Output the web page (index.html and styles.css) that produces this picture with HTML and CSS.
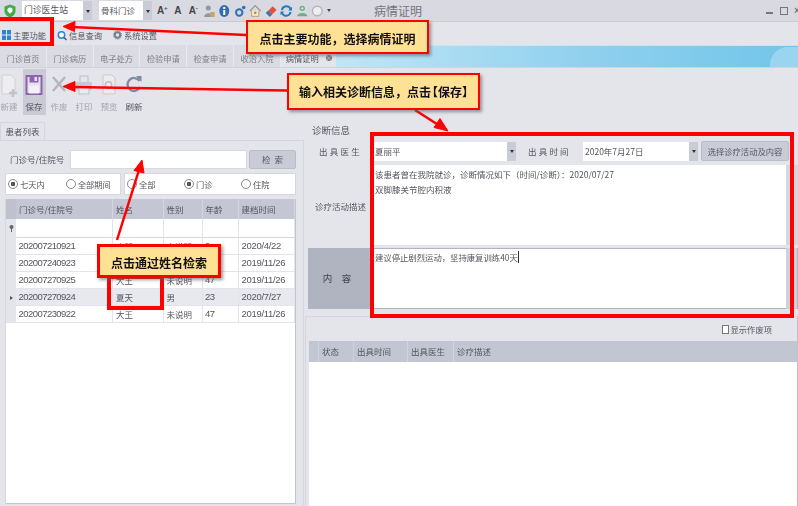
FILE: index.html
```html
<!DOCTYPE html>
<html lang="zh-CN">
<head>
<meta charset="utf-8">
<title>病情证明</title>
<link rel="stylesheet" href="styles.css">
</head>
<body>
<div class="stage">
<div class="app">
  <header class="titlebar">
    <svg class="shield" width="12" height="14" viewBox="0 0 12 14"><path d="M6 0.5 11.5 2.5V7C11.5 10.5 8.5 12.500 6 13.500 3.500 12.500.5 10.500.5 7V2.500Z" fill="#3fae45"/><circle cx="6" cy="6" r="2.600" fill="#fff"/><path d="M6 10 4 6.500H8Z" fill="#fff"/></svg>
    <div class="combo combo-station"><span class="combo-text">门诊医生站</span><span class="combo-arrow"></span></div>
    <div class="combo combo-dept"><span class="combo-text">骨科门诊</span><span class="combo-arrow"></span></div>
    <div class="quick">
      <span class="glyph">A<sup>+</sup></span>
      <span class="glyph">A</span>
      <span class="glyph">A<sup>-</sup></span>
      <svg viewBox="0 0 12 14"><circle cx="5" cy="4" r="2.500" fill="#8d97a3"/><path d="M1 13C1 8 9 8 9 13Z" fill="#8d97a3"/><rect x="7" y="8" width="4.500" height="5" fill="#c9a469"/></svg>
      <svg viewBox="0 0 12 14"><ellipse cx="6" cy="7" rx="5" ry="6" fill="#2f6fb5"/><rect x="5" y="6" width="2" height="5" fill="#fff"/><rect x="5" y="3" width="2" height="2" fill="#fff"/></svg>
      <svg viewBox="0 0 12 14"><circle cx="5" cy="8.500" r="3.200" fill="none" stroke="#2f6fb5" stroke-width="2"/><circle cx="9.500" cy="3.500" r="1.800" fill="#2f6fb5"/></svg>
      <svg viewBox="0 0 14 14"><path d="M1 7 7 1 13 7" fill="none" stroke="#999" stroke-width="1.500"/><path d="M3 7V13H11V7" fill="#f0ead8" stroke="#b79a5c"/><circle cx="7" cy="9" r="1.500" fill="#d9822b"/></svg>
      <svg viewBox="0 0 13 14"><path d="M1 9 8 2 12 6 5 13Z" fill="#e2533f"/><path d="M1 9 3 7 7 11 5 13Z" fill="#1f7fc4"/></svg>
      <svg viewBox="0 0 13 14"><path d="M2 6A4.700 4.700 0 0 1 11 5M11 8A4.700 4.700 0 0 1 2 9" fill="none" stroke="#1f7fc4" stroke-width="2"/><path d="M12.500 2.500V6.500H8.500ZM.5 11.500V7.500H4.500Z" fill="#1f7fc4"/></svg>
      <svg viewBox="0 0 14 14"><circle cx="7" cy="4" r="3" fill="#6fae84"/><path d="M1 13C2 8 12 8 13 13Z" fill="#6fae84"/><circle cx="7" cy="4" r="1.300" fill="#e4f0e6"/></svg>
      <svg viewBox="0 0 13 14"><circle cx="6.500" cy="7" r="5" fill="#eee" stroke="#b5b5bd" stroke-width="1.500"/></svg>
      <span class="mini-arrow"></span>
    </div>
    <div class="app-title">病情证明</div>
    <div class="winctl">
      <span class="win-min"></span>
      <span class="win-max"></span>
      <span class="win-close">×</span>
    </div>
  </header>

  <nav class="menubar">
    <div class="menu-item">
      <svg width="9" height="10" viewBox="0 0 9 10"><rect width="4" height="4.500" fill="#2a86cf"/><rect x="5" width="4" height="4.500" fill="#2a86cf"/><rect y="5.500" width="4" height="4.500" fill="#2a86cf"/><rect x="5" y="5.500" width="4" height="4.500" fill="#2a86cf"/></svg>
      <span>主要功能</span>
    </div>
    <div class="menu-item">
      <svg width="10" height="11" viewBox="0 0 10 11"><circle cx="4.500" cy="5" r="3.200" fill="#fff" stroke="#2a86cf" stroke-width="1.500"/><path d="M7 7.500 9.500 10" stroke="#555" stroke-width="1.500"/></svg>
      <span>信息查询</span>
    </div>
    <div class="menu-item">
      <svg width="9" height="10" viewBox="0 0 10 10"><circle cx="5" cy="5" r="3" fill="none" stroke="#73808f" stroke-width="2.200"/><circle cx="5" cy="5" r="4.600" fill="none" stroke="#73808f" stroke-width="1" stroke-dasharray="1.500 1.400"/></svg>
      <span>系统设置</span>
    </div>
  </nav>

  <div class="tabstrip">
    <span class="tab">门诊首页</span>
    <span class="tab">门诊病历</span>
    <span class="tab">电子处方</span>
    <span class="tab">检验申请</span>
    <span class="tab">检查申请</span>
    <span class="tab">收治入院</span>
    <span class="tab tab-active">病情证明<i class="tab-close">×</i></span>
    <span class="tab-fill"></span>
  </div>

  <div class="toolbar">
    <div class="tool tool-off">
      <svg width="18" height="24" viewBox="0 0 18 24"><path d="M2 1H11L15 5V20H2Z" fill="#eeeef0" stroke="#cfcfd3"/><path d="M13 15V23M9 19H17" stroke="#c4c4c8" stroke-width="2.500"/></svg>
      <span>新建</span>
    </div>
    <div class="tool tool-on">
      <svg width="20" height="24" viewBox="0 0 20 24"><path d="M2.500 2H17.500V20H2.500Z" fill="#e6dff0" stroke="#8d65ad" stroke-width="2"/><rect x="5.500" y="2" width="9" height="6.500" fill="#8d65ad"/><rect x="10.500" y="3" width="2.500" height="4" fill="#e6dff0"/><rect x="5" y="11.500" width="10" height="8" fill="#f4f0f8"/></svg>
      <span>保存</span>
    </div>
    <div class="tool tool-off">
      <svg width="18" height="24" viewBox="0 0 18 24"><path d="M3 3 15 17M15 3 3 17" stroke="#b4b6bf" stroke-width="2.500"/></svg>
      <span>作废</span>
    </div>
    <div class="tool tool-off">
      <svg width="18" height="24" viewBox="0 0 18 24"><rect x="5" y="2" width="8" height="7" fill="#e6e6ea" stroke="#bdbdc3"/><rect x="1" y="8" width="16" height="8" fill="#c8c9cf"/><rect x="4" y="13" width="10" height="7" fill="#ececef" stroke="#bdbdc3"/></svg>
      <span>打印</span>
    </div>
    <div class="tool tool-off">
      <svg width="18" height="24" viewBox="0 0 18 24"><path d="M3 1H12L15 4V20H3Z" fill="#ececef" stroke="#c9c9ce"/><circle cx="8.500" cy="11" r="3.200" fill="none" stroke="#bdbdc3" stroke-width="1.500"/></svg>
      <span>预览</span>
    </div>
    <div class="tool">
      <svg width="18" height="24" viewBox="0 0 18 24"><path d="M14.500 7A6.500 6.500 0 1 0 15 13" fill="none" stroke="#7f8ba1" stroke-width="2.300"/><path d="M11 2H16.500V8Z" fill="#7f8ba1"/></svg>
      <span>刷新</span>
    </div>
  </div>

  <main class="workspace">
    <section class="left-pane">
      <div class="pane-tab">患者列表</div>
      <div class="pane-body">
        <div class="search-row">
          <label class="search-label">门诊号/住院号</label>
          <div class="input"></div>
          <button class="btn-search">检 索</button>
        </div>
        <div class="filter-row">
          <div class="radio-box radio-box-a">
            <span class="radio checked">七天内</span>
            <span class="radio">全部期间</span>
          </div>
          <div class="radio-box radio-box-b">
            <span class="radio">全部</span>
            <span class="radio checked">门诊</span>
            <span class="radio">住院</span>
          </div>
        </div>
        <div class="grid">
          <div class="grid-row grid-head"><span></span><span>门诊号/住院号</span><span>姓名</span><span>性别</span><span>年龄</span><span>建档时间</span></div>
          <div class="grid-row grid-filter"><span class="pin">
            <svg width="5" height="7" viewBox="0 0 5 7"><circle cx="2.500" cy="2" r="2" fill="#666"/><path d="M2.500 3V7" stroke="#666"/></svg></span><span></span><span></span><span></span><span></span><span></span></div>
          <div class="grid-row"><span></span><span class="num">202007210921</span><span>小明</span><span>未说明</span><span class="num">9</span><span class="date">2020/4/22</span></div>
          <div class="grid-row"><span></span><span class="num">202007240923</span><span>大王</span><span>未说明</span><span class="num">47</span><span class="date">2019/11/26</span></div>
          <div class="grid-row"><span></span><span class="num">202007270925</span><span>大王</span><span>未说明</span><span class="num">47</span><span class="date">2019/11/26</span></div>
          <div class="grid-row grid-selected"><span class="row-mark"></span><span class="num">202007270924</span><span>夏天</span><span>男</span><span class="num">23</span><span class="date">2020/7/27</span></div>
          <div class="grid-row"><span></span><span class="num">202007230922</span><span>大王</span><span>未说明</span><span class="num">47</span><span class="date">2019/11/26</span></div>
        </div>
      </div>
    </section>

    <section class="right-pane">
      <div class="section-title">诊断信息</div>
      <div class="form-panel">
        <div class="form-row">
          <label class="form-label spaced">出具医生</label>
          <div class="combo combo-doctor"><span class="combo-text">夏丽平</span><span class="combo-arrow"></span></div>
          <label class="form-label-2 spaced">出具时间</label>
          <div class="combo combo-date"><span class="combo-text">2020年7月27日</span><span class="combo-arrow"></span></div>
          <button class="btn-pick">选择诊疗活动及内容</button>
        </div>
        <div class="desc-row">
          <label class="form-label form-label-desc">诊疗活动描述</label>
          <div class="textarea textarea-desc">该患者曾在我院就诊，诊断情况如下（时间/诊断）：2020/07/27<br>双脚膝关节腔内积液</div>
          <span class="row-end"></span>
        </div>
        <div class="content-row">
          <label class="form-label wide">内&emsp;容</label>
          <div class="textarea textarea-content"><span class="caret-text">建议停止剧烈运动，坚持康复训练40天</span></div>
          <span class="row-end"></span>
        </div>
      </div>
      <div class="history">
        <div class="history-opt"><span class="checkbox"></span>显示作废项</div>
        <div class="history-grid">
          <div class="history-head"><span></span><span>状态</span><span>出具时间</span><span>出具医生</span><span>诊疗描述</span></div>
        </div>
      </div>
    </section>
  </main>
</div>

<div class="mark mark-menu"></div>
<div class="mark mark-name"></div>
<div class="mark mark-form"></div>

<svg class="arrows" width="798" height="506" viewBox="0 0 798 506">
  <g fill="#f00" stroke="#f00">
    <path d="M246 35 72 27" stroke-width="2.500"/>
    <path d="M63 26.500 75 21.500 74.500 31.500Z"/>
    <path d="M287 90.500 72 87" stroke-width="2.500"/>
    <path d="M63 86.500 75 81.500 75 91.500Z"/>
    <path d="M415 110 440 126" stroke-width="2.500"/>
    <path d="M448 131 434 127.500 440 118.500Z"/>
    <path d="M117 240 139 170" stroke-width="2.500"/>
    <path d="M142 160 144 173 134 170.500Z"/>
  </g>
</svg>

<div class="callout callout-1">点击主要功能，选择病情证明</div>
<div class="callout callout-2">输入相关诊断信息，点击<span class="br-open">【</span>保存<span class="br-close">】</span></div>
<div class="callout callout-3">点击通过姓名检索</div>
</div>
</body>
</html>
```

FILE: styles.css
```css
* { box-sizing: border-box; }
html, body { margin: 0; padding: 0; }
body {
  width: 798px;
  height: 506px;
  overflow: hidden;
  background: #e4e5ea;
  font-family: "Noto Sans CJK SC", "Liberation Sans", sans-serif;
  font-size: 8.500px;
  color: #55555d;
}
.stage { position: relative; width: 798px; height: 506px; overflow: hidden; }
.app {
  width: 798px;
  height: 506px;
  display: flex;
  flex-direction: column;
  filter: blur(0.35px);
}

/* title bar */
.titlebar {
  height: 22px;
  flex: none;
  display: flex;
  align-items: center;
  background: #d9d9e2;
  border-bottom: 1px solid #c9c9d3;
  padding-left: 4px;
  overflow: hidden;
}
.shield { flex: none; }
.combo {
  display: flex;
  align-items: stretch;
  background: #fff;
  flex: none;
}
.combo-text {
  flex: 1;
  padding-left: 2px;
  display: flex;
  align-items: center;
  white-space: nowrap;
  overflow: hidden;
  line-height: 1;
}
.combo-arrow {
  width: 9px;
  background: #c9cbd6;
  position: relative;
}
.combo-arrow::after {
  content: "";
  position: absolute;
  left: 3px;
  top: 50%;
  margin-top: -1px;
  border: 2px solid transparent;
  border-top: 3px solid #333;
  border-bottom: 0;
}
.combo-station { width: 70px; height: 19px; margin-left: 6px; font-size: 8.800px; }
.combo-dept { width: 53px; height: 19px; margin-left: 7px; font-size: 8.500px; }
.quick {
  display: flex;
  align-items: center;
  width: 180px;
  margin-left: 4px;
  gap: 3px;
}
.quick svg { flex: none; display: block; width: 12.500px; height: 14px; }
.glyph {
  width: 12.500px;
  flex: none;
  font-family: "Liberation Sans", sans-serif;
  font-size: 10px;
  font-weight: bold;
  color: #444;
  line-height: 1;
  text-align: center;
}
.glyph sup { font-size: 6px; line-height: 0; }
.mini-arrow { border: 2px solid transparent; border-top: 3px solid #444; border-bottom: 0; }
.app-title {
  margin-left: 38px;
  font-size: 12px;
  color: #74747d;
  line-height: 1;
  flex: none;
}
.winctl {
  margin-left: auto;
  display: flex;
  align-items: center;
  gap: 7px;
  width: 32px;
  flex: none;
}
.win-min { width: 7px; height: 2px; background: #777; margin-top: 4px; flex: none; }
.win-max { width: 8px; height: 8px; border: 1px solid #777; flex: none; }
.win-close { font-family: "Liberation Sans", sans-serif; font-size: 11px; font-weight: bold; line-height: 1; color: #777; margin-left: -1px; }

/* menu */
.menubar {
  height: 23px;
  flex: none;
  display: flex;
  align-items: center;
  padding-left: 2px;
  padding-top: 3px;
  background: #e4e5ea;
  gap: 11px;
}
.menu-item { display: flex; align-items: center; gap: 2px; line-height: 1; color: #55555e; }
.menu-item svg { flex: none; }
.menu-item span { font-size: 8.250px; white-space: nowrap; }

/* tabs */
.tabstrip {
  height: 23px;
  flex: none;
  display: flex;
  background: #e4e5ea;
  border-bottom: 1px solid #cfd3dc;
}
.tab {
  width: 46.800px;
  display: flex;
  align-items: center;
  justify-content: center;
  padding-top: 4px;
  background: #dadbe3;
  border-right: 1px solid #e9eaee;
  color: #7d7e88;
  font-size: 8.250px;
  line-height: 1;
  flex: none;
}
.tab-active {
  width: 55px;
  background: #e4e5ea;
  color: #55555e;
  justify-content: flex-start;
  padding-left: 5px;
  gap: 7px;
  border-right: 0;
}
.tab-close {
  width: 6px;
  height: 6px;
  border-radius: 50%;
  background: #777;
  color: #e4e5ea;
  font-size: 6px;
  font-style: normal;
  line-height: 6px;
  text-align: center;
  flex: none;
}
.tab-fill {
  flex: 1;
  position: relative;
  overflow: hidden;
  background: linear-gradient(90deg, #bfe6f6 0%, #8fd0ee 55%, #71c5e9 100%);
  border-top: 1px solid #c6e6f2;
}
.tab-fill::after {
  content: "";
  position: absolute;
  right: -10px;
  top: 1px;
  width: 38px;
  height: 30px;
  border-top-left-radius: 18px;
  background: #9ad5ef;
}

/* toolbar */
.toolbar {
  height: 50px;
  flex: none;
  display: flex;
  padding-top: 1px;
  background: #e4e5ea;
}
.tool {
  width: 25px;
  height: 46px;
  flex: none;
  display: flex;
  flex-direction: column;
  align-items: center;
  padding-top: 5px;
  gap: 4px;
  line-height: 1;
  font-size: 8.500px;
  color: #55555e;
}
.tool:first-child { margin-left: -3.500px; }
.tool span { white-space: nowrap; }
.tool svg { display: block; flex: none; }
.tool-off { color: #a3a3ac; }
.tool-on { background: #c9cad5; background-clip: padding-box; border: solid transparent; border-width: 0 1px; }

/* workspace */
.workspace { flex: 1; min-height: 0; display: flex; }
.left-pane { width: 304px; flex: none; display: flex; flex-direction: column; padding-top: 4px; }
.pane-tab {
  width: 45px;
  height: 18px;
  flex: none;
  display: flex;
  align-items: center;
  justify-content: center;
  border: 1px solid #d5d6de;
  border-bottom: 0;
  background: #e4e5ea;
  font-size: 8.500px;
  line-height: 1;
}
.pane-body {
  flex: 1;
  min-height: 0;
  display: flex;
  flex-direction: column;
  padding: 9px 6px 2px 5px;
  border-top: 1px solid #d5d6de;
  border-right: 1px solid #d5d6de;
}
.search-row { display: flex; align-items: center; height: 19px; flex: none; }
.search-label { width: 65px; padding-left: 5px; font-size: 8.500px; white-space: nowrap; line-height: 1; }
.input { width: 177px; height: 19px; background: #fff; border: 1px solid #d8d9e0; }
.btn-search {
  width: 47px;
  height: 19px;
  margin-left: 2px;
  padding: 0;
  border: 1px solid #babcc8;
  border-radius: 2px;
  background: #c9cbd6;
  font: inherit;
  color: #55555e;
  line-height: 1;
  word-spacing: 2px;
}
.filter-row { display: flex; height: 22px; margin-top: 4px; gap: 3px; flex: none; }
.radio-box { background: #fff; border: 1px solid #d5d6de; display: flex; align-items: center; line-height: 1; }
.radio-box-a { width: 116px; padding-left: 2px; gap: 21px; }
.radio-box-b { width: 172px; padding-left: 2px; gap: 28.500px; }
.radio { display: flex; align-items: center; gap: 2px; white-space: nowrap; font-size: 8.250px; }
.radio::before {
  content: "";
  width: 8px;
  height: 8px;
  flex: none;
  border-radius: 50%;
  border: 1px solid #888;
  background: #fff;
}
.radio.checked::before { background: radial-gradient(circle, #555 0 2px, #fff 2.500px); }

.grid {
  flex: 1;
  margin-top: 4px;
  background: #fff;
  border: 1px solid #c4c4d0;
  border-top: 0;
  border-left-color: #d5d6de;
  width: 291px;
}
.grid-row {
  display: grid;
  grid-template-columns: 10px 97px 50.500px 39px 36px 56.500px;
  height: 17px;
  background: #fff;
}
.grid-row > span {
  display: flex;
  align-items: center;
  padding-left: 3px;
  border-right: 1px solid #e3e4ea;
  border-bottom: 1px solid #e3e4ea;
  line-height: 1;
  white-space: nowrap;
  overflow: hidden;
}
.grid-row > span:first-child { background: #e4e5ea; padding-left: 0; border-bottom: 0; border-right: 0; }
.grid-head { height: 20px; background: #c4c6d3; }
.grid-head > span { background: #c4c6d3; border-color: #d3d5df; border-bottom: 0; }
.grid-head > span:first-child { background: #bfc1ce; }
.grid-filter { height: 19px; }
.grid-filter > span { border-bottom: 1px solid #d5d6de; }
.pin { justify-content: center; padding-left: 0 !important; }
.grid-row > .num { font-family: "Liberation Sans", sans-serif; font-size: 9.500px; letter-spacing: -0.550px; padding-left: 2.500px; }
.grid-row > .date { font-family: "Liberation Sans", sans-serif; font-size: 9.500px; letter-spacing: -0.300px; }
.grid-selected { background: #e8e9ef; }
.grid-selected > span { background: #e8e9ef; }
.row-mark::after {
  content: "";
  border: 2.500px solid transparent;
  border-left: 3px solid #555;
  border-right: 0;
  margin-left: 4px;
}

.right-pane { flex: 1; min-width: 0; display: flex; flex-direction: column; padding-top: 5px; padding-left: 1px; }
.section-title { height: 16px; padding-left: 7px; font-size: 9.500px; line-height: 1; display: flex; align-items: center; flex: none; }
.form-panel { flex: none; height: 172px; padding-left: 3px; display: flex; flex-direction: column; }
.form-row { display: flex; align-items: center; height: 20px; margin-top: 2px; flex: none; }
.form-label { width: 65px; flex: none; text-align: center; line-height: 1; font-size: 8.500px; white-space: nowrap; }
.form-label-desc { margin-top: 2px; }
.spaced { letter-spacing: 2.200px; }
.form-label-2 { width: 55px; margin-left: 12px; flex: none; line-height: 1; font-size: 8.500px; white-space: nowrap; }
.combo-doctor { width: 143px; height: 19px; }
.combo-date { width: 115px; height: 19px; }
.btn-pick {
  width: 88px;
  height: 20px;
  margin-left: 3px;
  padding: 0;
  border: 1px solid #babcc8;
  border-radius: 2px;
  background: #c9cbd6;
  font: inherit;
  font-size: 8.300px;
  color: #55555e;
  line-height: 1;
  white-space: nowrap;
}
.desc-row { display: flex; align-items: center; height: 80px; margin-top: 4px; flex: none; }
.textarea {
  width: 413px;
  height: 100%;
  background: #fff;
  padding: 2px 2px;
  font-size: 8.500px;
  line-height: 15px;
  color: #55555d;
  flex: none;
}
.row-end { flex: 1; align-self: stretch; background: #d5d7df; }
.content-row {
  display: flex;
  align-items: center;
  height: 61px;
  margin-top: 3px;
  background: #b0b4c1;
  padding: 1px 0;
  flex: none;
}
.content-row .row-end { background: #ced0da; margin: -1px 1px -1px 0; }
.wide { font-size: 9.500px; color: #44444c; padding-right: 7px; }
.textarea-content { padding-top: 1px; height: 59px; font-size: 8.350px; }
.caret-text { border-right: 1px solid #333; display: inline-block; line-height: 12px; }
.history {
  flex: 1;
  min-height: 0;
  margin-top: 5px;
  border: 1px solid #d5d6de;
  border-right-color: #c0c0cc;
  border-bottom: 0;
  padding: 0 0 0 3px;
  display: flex;
  flex-direction: column;
}
.history-opt {
  height: 24px;
  flex: none;
  display: flex;
  align-items: center;
  justify-content: flex-end;
  padding-right: 25px;
  line-height: 1;
  gap: 2px;
  font-size: 8.300px;
}
.checkbox { width: 7px; height: 9px; border: 1px solid #777; background: #fff; flex: none; }
.history-grid { flex: 1; background: #fff; }
.history-head {
  height: 21px;
  display: grid;
  grid-template-columns: 10px 35px 54px 46px 1fr;
  background: #c2c5d2;
  line-height: 1;
  font-size: 8.500px;
}
.history-head span { display: flex; align-items: center; padding-left: 3px; border-right: 1px solid #d0d2dc; }
.history-head span:last-child { border-right: 0; }

/* annotation overlay */
.mark { position: absolute; border: 4px solid #f00; }
.mark-menu { left: -4px; top: 17px; width: 58px; height: 29px; }
.mark-name { left: 107px; top: 275px; width: 57px; height: 35px; }
.mark-form { left: 370px; top: 132px; width: 424px; height: 186px; }
.arrows { position: absolute; left: 0; top: 0; }
.callout {
  position: absolute;
  display: flex;
  align-items: center;
  justify-content: center;
  background: #ffe196;
  border: 2px solid #f00;
  box-shadow: 2px 2px 3px rgba(90, 90, 90, 0.6);
  color: #111;
  font-size: 12px;
  font-weight: bold;
  line-height: 1;
  white-space: nowrap;
}
.callout-1 { left: 246px; top: 20px; width: 183px; height: 34px; padding-top: 4px; }
.callout-2 { left: 287px; top: 73px; width: 193px; height: 37px; }
.callout-3 { left: 97px; top: 244px; width: 124px; height: 34px; border-width: 3px; padding-top: 3px; }
.br-open { margin-left: -5px; }
.br-close { margin-right: -6px; }
```
